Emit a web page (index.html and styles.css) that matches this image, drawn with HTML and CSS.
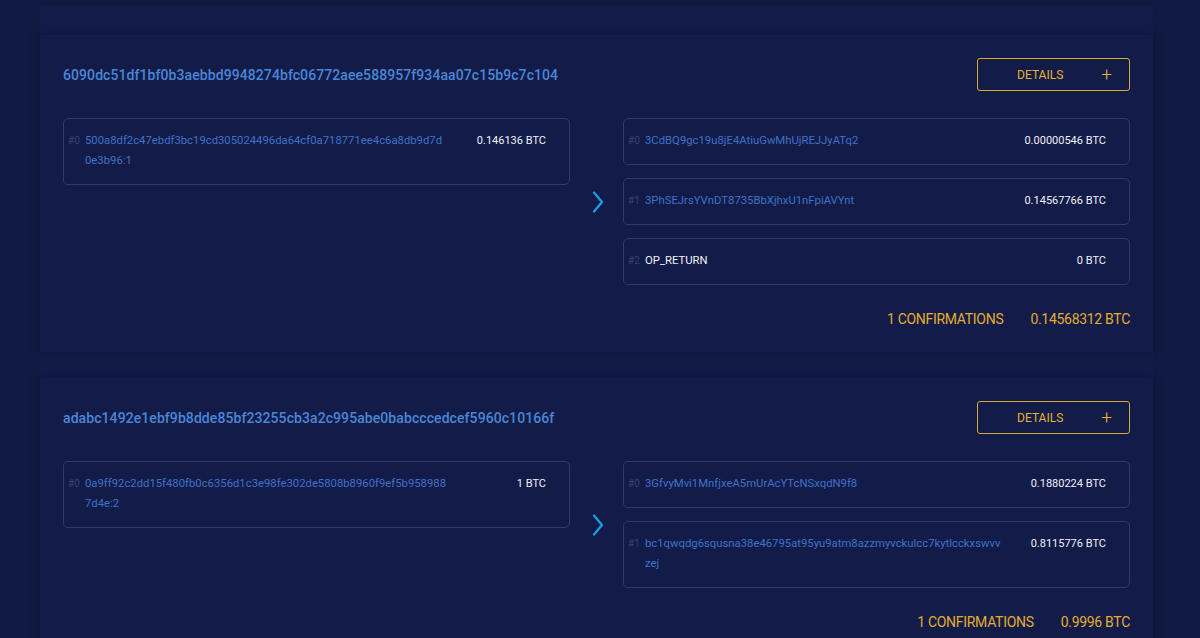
FILE: index.html
```html
<!DOCTYPE html>
<html lang="en">
<head>
<meta charset="utf-8">
<title>Transactions</title>
<link rel="stylesheet" href="styles.css">
</head>
<body>
<main class="tx-list">

  <section class="tx">
    <header class="tx-head">
      <a class="tx-hash" href="#">6090dc51df1bf0b3aebbd9948274bfc06772aee588957f934aa07c15b9c7c104</a>
      <button class="details" type="button"><span>DETAILS</span><span class="plus">+</span></button>
    </header>
    <div class="tx-body">
      <div class="io-col ins">
        <div class="io"><span class="idx">#0</span><a class="addr" href="#">500a8df2c47ebdf3bc19cd305024496da64cf0a718771ee4c6a8db9d7d0e3b96:1</a><span class="amt">0.146136 BTC</span></div>
      </div>
      <div class="flow">
        <svg class="chev" width="12" height="22" viewBox="0 0 12 22"><path d="M2 1.5 L10 11 L2 20.5" fill="none" stroke="currentColor" stroke-width="2.2" stroke-linecap="round" stroke-linejoin="round"/></svg>
      </div>
      <div class="io-col outs">
        <div class="io"><span class="idx">#0</span><a class="addr" href="#">3CdBQ9gc19u8jE4AtiuGwMhUjREJJyATq2</a><span class="amt">0.00000546 BTC</span></div>
        <div class="io"><span class="idx">#1</span><a class="addr" href="#">3PhSEJrsYVnDT8735BbXjhxU1nFpiAVYnt</a><span class="amt">0.14567766 BTC</span></div>
        <div class="io"><span class="idx">#2</span><span class="addr plain">OP_RETURN</span><span class="amt">0 BTC</span></div>
      </div>
    </div>
    <footer class="tx-foot">
      <span>1 CONFIRMATIONS</span>
      <span>0.14568312 BTC</span>
    </footer>
  </section>

  <section class="tx">
    <header class="tx-head">
      <a class="tx-hash" href="#">adabc1492e1ebf9b8dde85bf23255cb3a2c995abe0babcccedcef5960c10166f</a>
      <button class="details" type="button"><span>DETAILS</span><span class="plus">+</span></button>
    </header>
    <div class="tx-body">
      <div class="io-col ins">
        <div class="io"><span class="idx">#0</span><a class="addr" href="#">0a9ff92c2dd15f480fb0c6356d1c3e98fe302de5808b8960f9ef5b9589887d4e:2</a><span class="amt">1 BTC</span></div>
      </div>
      <div class="flow">
        <svg class="chev" width="12" height="22" viewBox="0 0 12 22"><path d="M2 1.5 L10 11 L2 20.5" fill="none" stroke="currentColor" stroke-width="2.2" stroke-linecap="round" stroke-linejoin="round"/></svg>
      </div>
      <div class="io-col outs">
        <div class="io"><span class="idx">#0</span><a class="addr" href="#">3GfvyMvi1MnfjxeA5mUrAcYTcNSxqdN9f8</a><span class="amt">0.1880224 BTC</span></div>
        <div class="io"><span class="idx">#1</span><a class="addr" href="#">bc1qwqdg6squsna38e46795at95yu9atm8azzmyvckulcc7kytlcckxswvvzej</a><span class="amt">0.8115776 BTC</span></div>
      </div>
    </div>
    <footer class="tx-foot">
      <span>1 CONFIRMATIONS</span>
      <span>0.9996 BTC</span>
    </footer>
  </section>

</main>
</body>
</html>
```

FILE: styles.css
```css
html, body {
  margin: 0;
  padding: 0;
  height: 100%;
  overflow: hidden;
}

body {
  background: #111a42;
  font-family: Roboto, "Liberation Sans", sans-serif;
  color: #e6e9f2;
}

a {
  text-decoration: none;
}

.tx-list {
  margin: 6px 47px 0 40px;
  padding-top: 29px;
  background: #131c48;
  display: flex;
  flex-direction: column;
  gap: 26px;
  min-height: 700px;
}

.tx {
  background: #131c49;
  padding: 23px;
  box-shadow: 0 0 8px rgba(8, 12, 40, 0.55);
}

.tx-head {
  display: flex;
  align-items: center;
  justify-content: space-between;
  height: 33px;
}

.tx-hash {
  color: #4a86d6;
  font-size: 14px;
  font-weight: 500;
  letter-spacing: 0.08px;
}

.details {
  width: 153px;
  height: 33px;
  background: transparent;
  border: 1px solid #d9ab2c;
  border-radius: 3px;
  color: #e2b231;
  font-family: inherit;
  font-size: 12px;
  display: flex;
  align-items: center;
  justify-content: flex-end;
  gap: 38px;
  padding: 0 17px 0 0;
}

.details .plus {
  font-size: 19px;
  font-weight: 300;
  line-height: 1;
}

.tx-body {
  margin-top: 27px;
  display: grid;
  grid-template-columns: 507px 53px 507px;
  align-items: start;
}

.io-col {
  display: flex;
  flex-direction: column;
  gap: 13px;
}

.io {
  display: flex;
  align-items: flex-start;
  border: 1px solid #2f3a68;
  border-radius: 5px;
  padding: 12px 23px 13px 4px;
  line-height: 20px;
  font-size: 11px;
}

.idx {
  flex: 0 0 17px;
  color: #36426c;
  font-size: 10px;
}

.addr {
  flex: 0 0 359px;
  color: #3e72c8;
  font-size: 11.3px;
  word-break: break-all;
}

/* outpoints (txid:vout) get a slightly wider column than addresses */
.ins .addr {
  flex-basis: 361px;
}

.addr.plain {
  color: #eef1f8;
}

.amt {
  flex: 1;
  text-align: right;
  color: #eef1f8;
  white-space: nowrap;
}

.flow {
  align-self: stretch;
  display: flex;
  align-items: center;
  justify-content: center;
  color: #1aa0e4;
  padding-left: 3px;
}

.tx-foot {
  margin-top: 24px;
  display: flex;
  justify-content: flex-end;
  gap: 27px;
  color: #e2ac2f;
  font-size: 14px;
  letter-spacing: -0.3px;
  line-height: 20px;
}
```
